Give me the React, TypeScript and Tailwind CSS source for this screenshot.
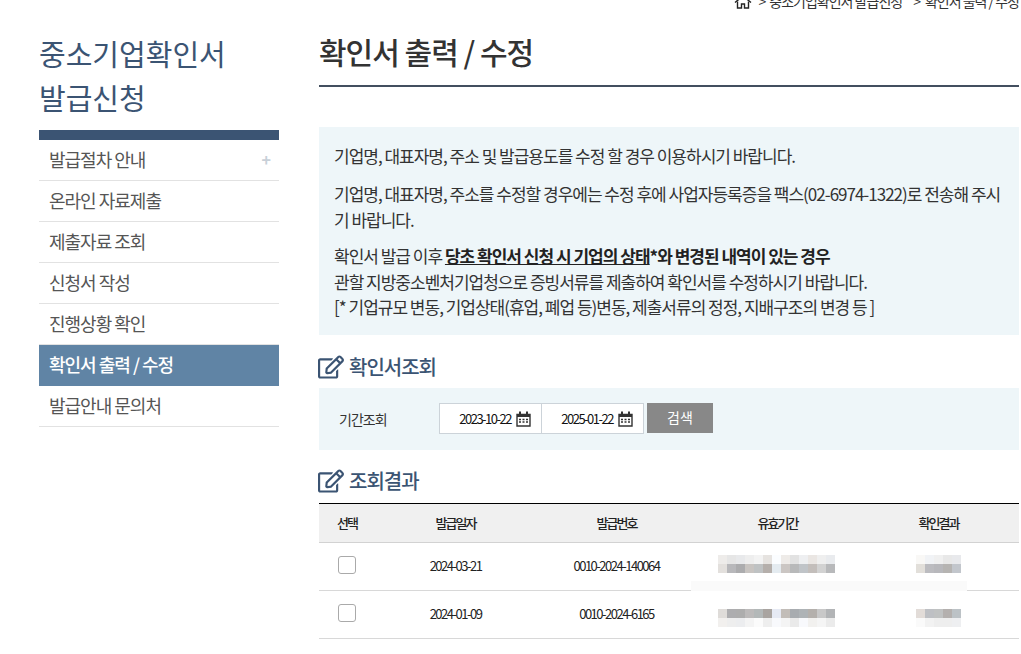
import { FaRegEdit } from 'react-icons/fa';

const menu = ['발급절차 안내', '온라인 자료제출', '제출자료 조회', '신청서 작성', '진행상황 확인', '확인서 출력 / 수정', '발급안내 문의처'];

const rows = [
  {
    date: '2024-03-21',
    no: '0010-2024-140064',
    blurClass: 'mb-[5px]',
    period: [
      ['#eeecea', '#e6e6e6', '#e8e9eb', '#eeeeee', '#f3f3f3', '#e6e3e0', '#fbfdff', '#eeebe8', '#e2e2e2', '#eeeff1', '#eae6e3', '#efefef', '#e9ebee'],
      ['#e3e0dd', '#b8b8bb', '#acacae', '#c8c4c1', '#bfc2c3', '#b5afab', '#e4ebf0', '#cbc6c3', '#b8b9ba', '#c0c4c8', '#c3bebb', '#d2d2d2', '#b8b9bb'],
    ],
    result: [
      ['#f9f8f6', '#f1f3f6', '#f0f0f0', '#e8e8e8', '#e8e9ec'],
      ['#e2dfda', '#bcbcc0', '#b8b8bc', '#b6b4b2', '#c2c6cc'],
    ],
  },
  {
    date: '2024-01-09',
    no: '0010-2024-6165',
    blurClass: 'mt-[7px]',
    period: [
      ['#dfdcd9', '#adadaf', '#adadad', '#bcbaba', '#b3b8b8', '#a9a4a0', '#e6eaf4', '#c2bdb8', '#a8acb0', '#aeb3b6', '#b4b0ac', '#c8c8c8', '#b2b4b6'],
      ['#f2f0ee', '#eeeeee', '#ecedef', '#f4f4f4', '#fbfbfb', '#eeeeee', '#f8f9fc', '#f4f4f4', '#eaeaea', '#f8f9fc', '#f2f1ef', '#f5f5f5', '#ebebeb'],
    ],
    result: [
      ['#e2dcd8', '#bec0c4', '#c0c2c2', '#b4b0ae', '#bcc2c6'],
      ['#fafafa', '#f2f2f2', '#eeeeee', '#eeeeee', '#eeeff1'],
    ],
  },
];

// 모자이크 처리된 셀
function Mosaic({ cells }: { cells: string[][] }) {
  const size = 9;
  return (
    <svg width={cells[0].length * size} height={cells.length * size} className="mx-auto block" shapeRendering="crispEdges">
      {cells.map((row, y) =>
        row.map((c, x) => <rect key={`${x}-${y}`} x={x * size} y={y * size} width={size} height={size} fill={c} />)
      )}
    </svg>
  );
}

function CalendarIcon() {
  return (
    <svg width="15" height="16" viewBox="0 0 15 16" className="shrink-0 text-[#333]">
      <path d="M1 3.5h13v11.5H1z" fill="none" stroke="currentColor" strokeWidth="1.4" />
      <path d="M1 3h13v3H1z" fill="currentColor" />
      <path d="M4 .5v4M11 .5v4" stroke="currentColor" strokeWidth="2" />
      <path d="M3 8.5h2M6.5 8.5h2M10 8.5h2M3 11h2M6.5 11h2M10 11h2" stroke="currentColor" strokeWidth="1.4" />
    </svg>
  );
}

function HomeIcon() {
  return (
    <svg width="18" height="14" viewBox="0 0 18 14" fill="none" stroke="#222" strokeWidth="1.4" className="shrink-0">
      <path d="M1 7.5 9 1l8 6.5" />
      <path d="M3.5 6.5V13h4V9h3v4h4V6.5" />
    </svg>
  );
}

function SectionTitle({ title }: { title: string }) {
  return (
    <h3 className="flex h-7 items-center gap-[5px] text-[20px] leading-7 font-medium tracking-[-1px] text-[#3b5473]">
      <FaRegEdit className="ml-[-1px] h-[26px] w-[26px]" />
      {title}
    </h3>
  );
}

function DateInput({ value, className = '' }: { value: string; className?: string }) {
  return (
    <div className={`flex h-[31px] w-[103px] items-center justify-end gap-[5px] border border-[#ccd3d9] bg-white pr-[10px] text-[13px] tracking-[-1.5px] text-[#111] ${className}`}>
      {value}
      <CalendarIcon />
    </div>
  );
}

export default function App() {
  return (
    <div className="relative h-[654px] w-[1021px] overflow-hidden bg-white font-['Noto_Sans_CJK_KR','Noto_Sans',sans-serif] text-[#333]">
      {/* Breadcrumb */}
      <div className="mt-[-7px] flex h-[17px] items-center justify-end pr-[2px] text-[14px] leading-[17px] tracking-[-1px] text-[#333]">
        <HomeIcon />
        <span className="ml-[7px] mr-[4px]">&gt;</span>
        <span>중소기업확인서 발급신청</span>
        <span className="ml-[11px] mr-[5px]">&gt;</span>
        <span>확인서 출력 / 수정</span>
      </div>

      <div className="flex pl-[39px]">
        {/* Sidebar */}
        <aside className="w-[240px] shrink-0 pt-[21px]">
          <h2 className="text-[29px] leading-[44px] text-[#3b5473]">
            중소기업확인서
            <br />
            발급신청
          </h2>
          <div className="mt-[11px] h-[10px] bg-[#3b5473]" />
          <ul>
            {menu.map((item, i) => (
              <li
                key={item}
                className={`flex h-[41px] items-center justify-between px-[10px] pb-[2px] text-[18px] tracking-[-1px] ${
                  i === 5 ? 'bg-[#6084a5] font-medium text-white' : 'border-b border-[#e2e2e2] text-[#555]'
                }`}
              >
                {item}
                {i === 0 && <span className="mr-[-1px] text-[16px] font-bold text-[#c8d0d8]">+</span>}
              </li>
            ))}
          </ul>
        </aside>

        {/* Main */}
        <main className="ml-[40px] w-[700px] shrink-0">
          <div className="h-[77px] border-b-2 border-[#434f5f] pt-[24px]">
            <h1 className="text-[30px] leading-[34px] font-medium tracking-[-1px] text-[#333]">확인서 출력 / 수정</h1>
          </div>

          <div className="mt-[40px] h-[208px] bg-[#eef6f9] pt-[16px] pr-[14px] pl-[15px] text-[17px] leading-[26px] tracking-[-1px] break-all text-[#333]">
            <p>기업명, 대표자명, 주소 및 발급용도를 수정 할 경우 이용하시기 바랍니다.</p>
            <p className="mt-[12px]">기업명, 대표자명, 주소를 수정할 경우에는 수정 후에 사업자등록증을 팩스(02-6974-1322)로 전송해 주시기 바랍니다.</p>
            <p className="mt-[10px] leading-[25.5px]">
              확인서 발급 이후{' '}
              <b className="font-bold text-[#222]">
                <u>당초 확인서 신청 시 기업의 상태</u>*와 변경된 내역이 있는 경우
              </b>
              <br />
              관할 지방중소벤처기업청으로 증빙서류를 제출하여 확인서를 수정하시기 바랍니다.
              <br />
              [* 기업규모 변동, 기업상태(휴업, 폐업 등)변동, 제출서류의 정정, 지배구조의 변경 등 ]
            </p>
          </div>

          <div className="mt-[18px]">
            <SectionTitle title="확인서조회" />
          </div>

          <div className="mt-[7px] flex h-[62px] items-start bg-[#eef6f9] pt-[15px] pl-[20px]">
            <span className="w-[100px] self-center pb-[15px] text-[14px] tracking-[-1px] text-[#333]">기간조회</span>
            <DateInput value="2023-10-22" />
            <DateInput value="2025-01-22" className="ml-[-1px]" />
            <button className="ml-[3px] h-[30px] w-[66px] bg-[#888] pb-[2px] text-[14px] tracking-[0.2px] text-white">검색</button>
          </div>

          <div className="mt-[17px]">
            <SectionTitle title="조회결과" />
          </div>

          <table className="mt-[8px] w-[700px] table-fixed border-t border-t-black text-center text-[13px] tracking-[-1.5px] text-[#222]">
            <colgroup>
              <col className="w-[56px]" />
              <col />
              <col />
              <col />
              <col />
            </colgroup>
            <thead>
              <tr className="h-[39px] border-b border-[#d2d2d2] bg-[#f0f0f0] tracking-[-2px]">
                <th className="font-medium">선택</th>
                <th className="font-medium">발급일자</th>
                <th className="font-medium">발급번호</th>
                <th className="font-medium">유효기간</th>
                <th className="font-medium">확인결과</th>
              </tr>
            </thead>
            <tbody>
              {rows.map((r) => (
                <tr key={r.no} className="h-[48px] border-b border-[#d8d8d8]">
                  <td>
                    <input type="checkbox" className="mb-[4px] h-[18px] w-[18px] appearance-none rounded-[3px] border border-[#aaa] bg-white align-middle" />
                  </td>
                  <td className="pb-[2px]">{r.date}</td>
                  <td className="pb-[2px]">{r.no}</td>
                  <td className="pr-[2px]"><div className={r.blurClass}><Mosaic cells={r.period} /></div></td>
                  <td><div className={r.blurClass}><Mosaic cells={r.result} /></div></td>
                </tr>
              ))}
            </tbody>
          </table>
        </main>
      </div>

      {/* 모자이크 위에 겹친 옅은 띠 */}
      <div className="absolute top-[581px] left-[691px] h-[10px] w-[276px] bg-[#fafafa]" />
    </div>
  );
}
